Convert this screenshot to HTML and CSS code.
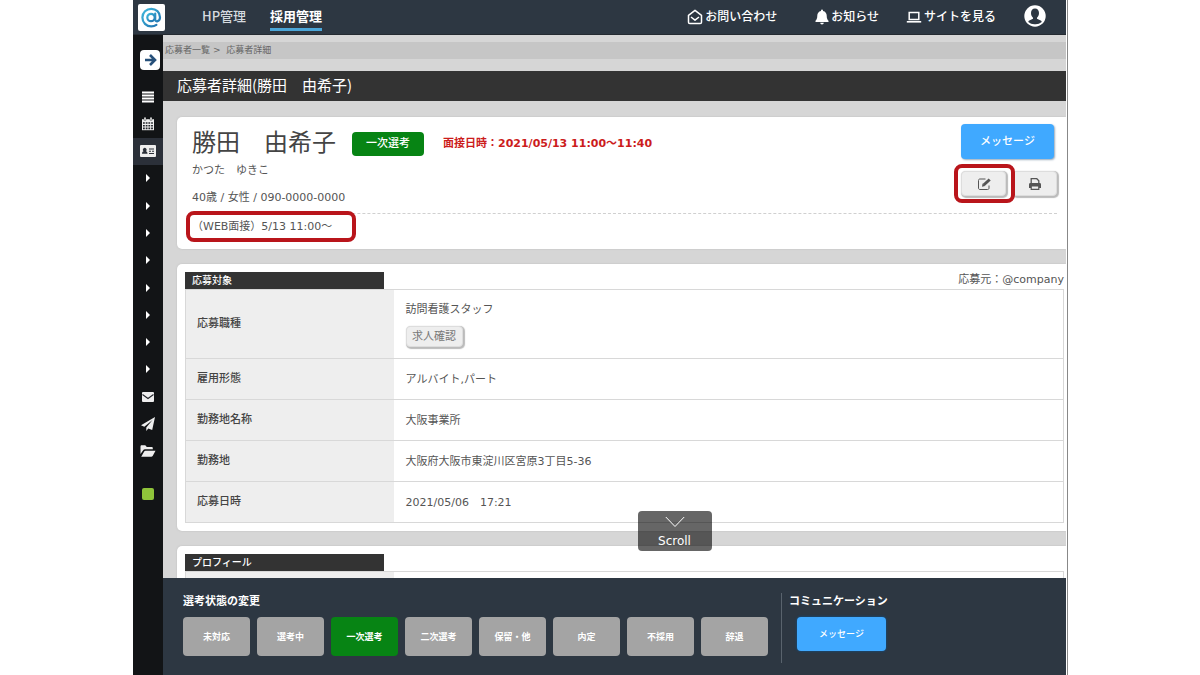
FILE: index.html
```html
<!DOCTYPE html>
<html lang="ja">
<head>
<meta charset="utf-8">
<title>応募者詳細</title>
<link rel="stylesheet" href="styles.css">
</head>
<body>
<div class="app">
  <header class="topbar">
    <a class="logo" href="#" aria-label="ホーム">
      <svg viewBox="0 0 27 27" width="27" height="27"><defs><linearGradient id="lg" x1="0" y1="0" x2="1" y2="1"><stop offset="0" stop-color="#3fb9dc"/><stop offset="1" stop-color="#1f6fae"/></linearGradient></defs><g fill="none" stroke="url(#lg)" stroke-width="2.200" stroke-linecap="round"><circle cx="13" cy="13.500" r="3.700"/><path d="M17.200 9.500v6.300c0 2.500 4.800 2 4.800-2.600 0-4.900-4-8.400-8.700-8.400-5 0-8.900 3.800-8.900 8.800s3.900 8.800 8.800 8.800c2.200 0 3.900-.6 5.200-1.500"/></g></svg>
    </a>
    <nav class="tabs">
      <a href="#">HP管理</a>
      <a class="current" href="#">採用管理</a>
    </nav>
    <nav class="tools">
      <a href="#"><svg viewBox="0 0 16 16" width="16" height="16" fill="none" stroke="#fff" stroke-width="1.500" stroke-linejoin="round"><path d="M1.500 6.300 8 1.300l6.500 5v7c0 .8-.5 1.300-1.300 1.300H2.800c-.8 0-1.300-.5-1.300-1.300zM4 8l4 3.200L12 8"/></svg>お問い合わせ</a>
      <a href="#"><svg viewBox="0 0 14 16" width="14" height="16" fill="#fff"><path d="M6 1.500a1 1 0 0 1 2 0v.4c2.400.5 3.700 2.300 3.700 4.700 0 3 .7 4.200 1.800 5.200v1.300H.5v-1.300c1.100-1 1.800-2.200 1.800-5.200C2.300 4.200 3.600 2.400 6 1.900zM5.200 13.800h3.600a1.800 1.800 0 0 1-3.600 0z"/></svg>お知らせ</a>
      <a href="#"><svg viewBox="0 0 16 16" width="16" height="16"><path d="M3.200 3.500h9.600v7H3.200z" fill="none" stroke="#fff" stroke-width="1.500"/><path d="M.8 12h14.400v1.600H.8z" fill="#fff"/></svg>サイトを見る</a>
      <a class="user" href="#" aria-label="アカウント"><svg viewBox="0 0 22 22" width="22" height="22"><circle cx="11" cy="11" r="10.700" fill="#fff"/><path d="M11 3.500c2.500 0 4 1.800 4 4.500 0 2-.8 3.700-2 4.700v1.100l3.700 1.600c.6.300 1 .8 1 1.500A9 9 0 0 1 11 19.300 9 9 0 0 1 4.300 16.900c0-.7.400-1.200 1-1.500L9 13.800v-1.100C7.800 11.700 7 10 7 8c0-2.700 1.500-4.500 4-4.500z" fill="#2d3742"/></svg></a>
    </nav>
  </header>

  <aside class="sidebar">
    <button class="expand" aria-label="メニューを開く"><svg viewBox="0 0 20 20" width="20" height="20" fill="none" stroke="#27507a" stroke-width="2.600"><path d="M5 10h9.500M10 5l5 5-5 5"/></svg></button>
    <nav class="menu">
      <a href="#" aria-label="メニュー"><svg viewBox="0 0 14 14" width="14" height="14" fill="#fff"><path d="M1 1.500h12v2H1zM1 4.500h12v2H1zM1 7.500h12v2H1zM1 10.500h12v2H1z"/></svg></a>
      <a href="#" aria-label="カレンダー"><svg viewBox="0 0 14 14" width="14" height="14"><path d="M1 2.200h12v11H1z" fill="#eee"/><path d="M3 .3h2v3H3zM9 .3h2v3H9z" fill="#eee" stroke="#121416" stroke-width=".4"/><path d="M2 5.200h1.800v1.600H2zM4.700 5.200h1.800v1.600H4.700zM7.400 5.200h1.800v1.600H7.400zM10.100 5.200h1.800v1.600h-1.800zM2 7.900h1.800v1.600H2zM4.700 7.900h1.800v1.600H4.700zM7.400 7.900h1.800v1.600H7.400zM10.100 7.900h1.800v1.600h-1.800zM2 10.600h1.800v1.600H2zM4.700 10.600h1.800v1.600H4.700zM7.400 10.600h1.800v1.600H7.400zM10.100 10.600h1.800v1.600h-1.800z" fill="#22252a"/></svg></a>
      <a class="current" href="#" aria-label="応募者"><svg viewBox="0 0 16 12" width="16" height="12"><rect width="16" height="12" rx="1" fill="#eee"/><path d="M2 8.800c0-1.600.7-2.200 1.600-2.500a1.900 1.900 0 1 1 2.300 0c.9.300 1.600.9 1.600 2.500zM9 3.500h5v1H9zM9 5.800h2v1H9zM12 5.800h2v1h-2zM9 8h5v1H9z" fill="#2b3039"/></svg></a>
      <a href="#" aria-label="項目1"><i class="caret"></i></a>
      <a href="#" aria-label="項目2"><i class="caret"></i></a>
      <a href="#" aria-label="項目3"><i class="caret"></i></a>
      <a href="#" aria-label="項目4"><i class="caret"></i></a>
      <a href="#" aria-label="項目5"><i class="caret"></i></a>
      <a href="#" aria-label="項目6"><i class="caret"></i></a>
      <a href="#" aria-label="項目7"><i class="caret"></i></a>
      <a href="#" aria-label="項目8"><i class="caret"></i></a>
      <a href="#" aria-label="メール"><svg viewBox="0 0 12 10" width="12" height="10"><rect width="12" height="10" rx="1" fill="#eee"/><path d="M.5 2.500 6 6.500l5.500-4" fill="none" stroke="#22252a" stroke-width="1.100"/></svg></a>
      <a href="#" aria-label="送信"><svg viewBox="0 0 14 14" width="14" height="14" fill="#eee"><path d="M14 0 0 8.200l3.300 1.500L11.500 3 5.300 10.400V14l2-2.500 3.900 1.600z"/></svg></a>
      <a href="#" aria-label="フォルダ"><svg viewBox="0 0 16 12" width="16" height="12" fill="#eee"><path d="M.5 9V1.500C.5.700 1 .3 1.700.3h3.600L6.800 2h4.800c.8 0 1.200.4 1.200 1.200v1H5.200c-1 0-1.700.4-2.200 1.200zM1.200 11.700l3-5.200c.3-.6.7-.8 1.300-.8H15.500l-2.700 5c-.4.700-.9 1-1.600 1z"/></svg></a>
    </nav>
    <span class="status"></span>
  </aside>

  <main class="main">
    <div class="crumbs"><a href="#">応募者一覧</a> &gt;&nbsp; <a href="#">応募者詳細</a></div>
    <h1 class="title">応募者詳細(勝田　由希子)</h1>

    <div class="cards">
      <section class="card profile">
        <div class="person">
          <div class="identity">
            <div class="name-row">
              <h2>勝田　由希子</h2>
              <span class="tag">一次選考</span>
              <span class="schedule">面接日時：2021/05/13 11:00～11:40</span>
            </div>
            <p class="kana">かつた　ゆきこ</p>
            <p class="facts">40歳 / 女性 / 090-0000-0000</p>
          </div>
          <div class="actions">
            <button class="btn-blue">メッセージ</button>
            <div class="icon-buttons">
              <button class="btn-grey marked" aria-label="編集"><svg viewBox="0 0 14 14" width="14" height="14" fill="none" stroke="#555"><path d="M8.500 2H3C2 2 1.500 2.500 1.500 3.500V11c0 1 .5 1.500 1.500 1.500h7.500c1 0 1.500-.5 1.500-1.500V8.500"/><path d="M12.700 2.500 6.700 8" stroke-width="3"/><path d="M5.600 6.500 5 9.700l3-.8z" fill="#555" stroke="none"/></svg></button>
              <button class="btn-grey" aria-label="印刷"><svg viewBox="0 0 14 14" width="14" height="14"><path d="M3.200 6V1.700h5.600l2 2V6" fill="none" stroke="#555" stroke-width="1.300"/><path d="M1 7.500C1 6.500 1.500 6 2.500 6h9c1 0 1.500.5 1.500 1.500V11H1z" fill="#555"/><path d="M3.200 9h7.600v3.300H3.200z" fill="#eee" stroke="#555" stroke-width="1.200"/></svg></button>
            </div>
          </div>
        </div>
        <p class="note"><span>（WEB面接）5/13 11:00～</span></p>
      </section>

      <section class="card">
        <div class="card-head"><h3>応募対象</h3><span class="source">応募元：@company</span></div>
        <table>
          <tr><th scope="row">応募職種</th><td>訪問看護スタッフ<br><button class="btn-grey job">求人確認</button></td></tr>
          <tr><th scope="row">雇用形態</th><td>アルバイト,パート</td></tr>
          <tr><th scope="row">勤務地名称</th><td>大阪事業所</td></tr>
          <tr><th scope="row">勤務地</th><td>大阪府大阪市東淀川区宮原3丁目5-36</td></tr>
          <tr><th scope="row">応募日時</th><td>2021/05/06　17:21</td></tr>
        </table>
      </section>

      <section class="card">
        <div class="card-head"><h3>プロフィール</h3></div>
        <table><tr><th scope="row"></th><td></td></tr></table>
      </section>
    </div>
    <button class="scroll"><svg viewBox="0 0 20 12" width="20" height="12" fill="none" stroke="#fff"><path d="M.8 1 10 10.500 19.200 1"/></svg>Scroll</button>
  </main>

  <footer class="footer">
    <section class="states">
      <h2>選考状態の変更</h2>
      <div class="state-buttons">
        <button>未対応</button>
        <button>選考中</button>
        <button class="current">一次選考</button>
        <button>二次選考</button>
        <button>保留・他</button>
        <button>内定</button>
        <button>不採用</button>
        <button>辞退</button>
      </div>
    </section>
    <section class="communication">
      <h2>コミュニケーション</h2>
      <button class="btn-blue">メッセージ</button>
    </section>
  </footer>
</div>
</body>
</html>
```
FILE: styles.css
```css
* { box-sizing: border-box; }

body {
  margin: 0;
  padding: 0 132px 0 133px;
  background: #fff;
  color: #555;
  font: 11px/16px "DejaVu Sans", "Noto Sans CJK JP", sans-serif;
}

h1, h2, h3, p { margin: 0; }
a { color: inherit; text-decoration: none; }
svg { display: block; flex: none; }

button {
  display: flex;
  align-items: center;
  justify-content: center;
  padding: 0;
  border: 0;
  font: inherit;
  color: inherit;
  white-space: nowrap;
}

.app {
  display: grid;
  grid-template: 35px minmax(0, 1fr) 97px / 30px minmax(0, 1fr);
  height: 100vh;
  padding-right: 1px;
  border-right: 1px solid #888;
}

/* top bar */
.topbar {
  grid-column: 1 / -1;
  display: flex;
  align-items: center;
  padding-left: 5px;
  background: #2d3742;
  border-bottom: 1px solid #242a31;
  color: #fff;
}

.logo { background: #fff; border-radius: 2px; }

.tabs {
  display: flex;
  gap: 24px;
  margin-left: 37px;
  padding-top: 1px;
  font: 500 13px/22px "Noto Sans CJK JP", sans-serif;
}

.tabs a { padding-bottom: 1px; border-bottom: 3px solid transparent; color: #d5dadf; }
.tabs .current { border-color: #4ba6d8; color: #fff; font-weight: 700; }

.tools {
  display: flex;
  align-items: center;
  margin-left: auto;
  padding-right: 20px;
  font-size: 12px;
  font-weight: 500;
}

.tools a { display: flex; align-items: center; gap: 2px; margin-left: 38px; }
.tools a + a + a { margin-left: 27px; }
.tools a.user { margin-left: 28px; margin-bottom: 2px; }

/* sidebar */
.sidebar {
  grid-row: 2 / 4;
  display: flex;
  flex-direction: column;
  align-items: center;
  padding-top: 15px;
  background: #121416;
}

.expand { width: 20px; height: 20px; margin-left: 3px; border-radius: 4px; background: #fff; }

.menu {
  display: grid;
  grid-template-rows: repeat(14, 1fr);
  width: 100%;
  height: 382px;
  margin-top: 13px;
}

.menu a { display: grid; place-items: center; }
.menu .current { background: #2b3039; }
.caret { border: solid transparent; border-width: 4px 0 4px 4px; border-left-color: #fff; }
.status { width: 12px; height: 12px; margin-top: 23px; border-radius: 2px; background: #8fc43a; }

/* main area */
.main { position: relative; overflow: hidden; background: #d6d6d6; }

.crumbs {
  margin: 7px 0 12px;
  padding-left: 2px;
  background: #c6c6c6;
  color: #666;
  font-size: 9px;
  line-height: 17px;
}

.title {
  padding: 0 14px 2px;
  background: #333;
  color: #fff;
  font: 400 15px/28px "Noto Sans CJK JP", sans-serif;
}

.cards { display: grid; gap: 15px; padding: 16px 0 0 14px; }

.card {
  padding: 8px 2px 8px 8px;
  border-radius: 5px 0 0 5px;
  background: #fff;
  box-shadow: 0 0 2px #bbb;
}

.profile { padding: 7px 9px 14px 15px; }
.person { display: flex; justify-content: space-between; height: 90px; border-bottom: 1px dashed #d0d0d0; }
.name-row { display: flex; align-items: flex-start; height: 38px; }
.name-row h2 { color: #444; font: 400 24px/34px "Noto Sans CJK JP", sans-serif; }

.tag {
  margin: 8px 19px 0 16px;
  padding: 0 14px;
  border-radius: 4px;
  background: #078414;
  color: #fff;
  font-weight: 500;
  line-height: 24px;
}

.schedule { margin-top: 12px; color: #cc1c1c; font-weight: 700; }
.kana { line-height: 18px; }
.facts { margin-top: 10px; }

.btn-blue {
  width: 93px;
  height: 35px;
  border-radius: 4px;
  background: #40a9ff;
  box-shadow: 1px 1px 2px #9ab;
  color: #fff;
  font-weight: 500;
}

.icon-buttons { display: flex; gap: 6px; margin-top: 12px; }

.btn-grey {
  width: 45px;
  height: 25px;
  border: 1px solid #ddd;
  border-radius: 4px;
  background: #eee;
  box-shadow: 1px 1px 1px 1px #bbb;
}

.marked, .note span { position: relative; }

.marked::after, .note span::after {
  content: "";
  position: absolute;
  inset: -8px -10px -8px -8px;
  border: 4px solid #b9151b;
  border-radius: 8px;
}

.note { padding-top: 5px; }
.note span { display: inline-block; }
.note span::after { inset: -8px -24px -7px -6px; }

.card-head { display: flex; justify-content: space-between; height: 17px; }

.card-head h3 {
  width: 199px;
  padding-left: 7px;
  background: #333;
  color: #fff;
  font-size: 10px;
  font-weight: 500;
  line-height: 17px;
}

table { width: 100%; border-collapse: collapse; border: 1px solid #d8d8d8; }
tr { height: 41px; border-top: 1px solid #d8d8d8; }
th { width: 208px; padding: 0 11px; background: #eee; color: #444; text-align: left; font-weight: 500; }
td { padding: 12px 12px 11px; }
.job { width: 57px; height: 21px; margin-top: 8px; color: #777; }

.scroll {
  position: absolute;
  bottom: 27px;
  left: 50%;
  flex-direction: column;
  gap: 5px;
  width: 74px;
  height: 40px;
  margin-left: 23px;
  padding-top: 2px;
  border-radius: 4px;
  background: rgba(0, 0, 0, .6);
  color: #fff;
  font-size: 12px;
}

/* bottom bar */
.footer { display: flex; padding: 15px 20px; background: #2d3742; color: #fff; }
.footer h2 { font-size: 11px; font-weight: 700; line-height: 18px; }
.state-buttons { display: flex; gap: 7px; margin-top: 6px; }

.state-buttons button {
  width: 67px;
  height: 39px;
  border-radius: 4px;
  background: #a4a4a4;
  font-size: 9px;
  font-weight: 700;
}

.state-buttons .current { background: #078414; }
.communication { height: 70px; margin-left: 13px; padding-left: 7px; border-left: 1px solid #59636d; }

.communication .btn-blue {
  width: 89px;
  height: 34px;
  margin: 6px 0 0 8px;
  box-shadow: 0 0 2px 1px #1c4468;
  font-size: 9px;
}
```
